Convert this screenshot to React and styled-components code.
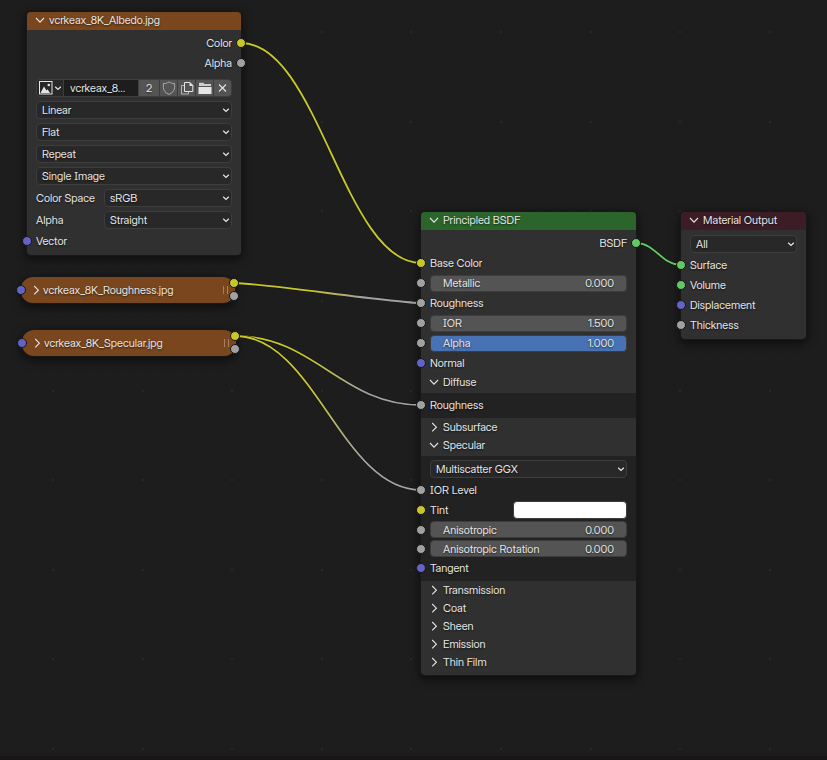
import React, { useId, useState } from 'react'
import styled, { createGlobalStyle } from 'styled-components'

const COLORS = {
    canvas: '#1d1d1d',
    body: '#303030',
    panel: '#222222',
    text: '#e5e5e5',
    image: '#79461d',
    shader: '#2b652b',
    output: '#3c1d26',
    yellow: '#c7c729',
    grey: '#a1a1a1',
    violet: '#6363c7',
    green: '#63c763',
}

const WIRES = [
    { id: 'albedo', from: [241, 43], to: [421, 263], start: COLORS.yellow, end: COLORS.yellow },
    { id: 'roughness', from: [234, 283], to: [421, 303], start: COLORS.yellow, end: COLORS.grey },
    { id: 'diffuse', from: [235, 336], to: [421, 405], start: COLORS.yellow, end: COLORS.grey },
    { id: 'level', from: [235, 336], to: [421, 490], start: COLORS.yellow, end: COLORS.grey },
    { id: 'surface', from: [636, 243], to: [681, 265], start: COLORS.green, end: COLORS.green },
]

const GRID_STEP = 17.93
const GRID_COLUMNS = Array.from({ length: 120 }, (_, i) => i)
const GRID_ROWS = Array.from({ length: 80 }, (_, i) => i)

const Chevron = ({ open }) => (
    <svg width="10" height="10" viewBox="0 0 10 10" fill="none" stroke="currentColor" strokeWidth="1.1">
        <path d={open ? 'M1 3 5 7.2 9 3' : 'M3.2 1 7.4 5.2 3.2 9.4'} />
    </svg>
)

const SmallChevron = () => (
    <svg width="8" height="8" viewBox="0 0 8 8" fill="none" stroke="currentColor" strokeWidth="1.3">
        <path d="M1.2 2.8 4 5.4 6.8 2.8" />
    </svg>
)

const ImageIcon = () => (
    <svg width="14" height="14" viewBox="0 0 14 14">
        <rect x="0.5" y="0.5" width="12.5" height="12.5" fill="none" stroke="#e5e5e5" />
        <path d="M1.5 12 5 5.5 7.5 9.5 8.6 8.2 11 12Z" fill="#e5e5e5" />
        <circle cx="9.8" cy="4" r="1.3" fill="#e5e5e5" />
    </svg>
)

const ShieldIcon = () => (
    <svg width="14" height="14" viewBox="0 0 14 14" fill="none" stroke="#a8a8a8">
        <path d="M7 1C8.8 2.1 10.6 2.6 12.6 2.6V6.5C12.6 9.8 10.2 12 7 13.4 3.8 12 1.4 9.8 1.4 6.5V2.6C3.4 2.6 5.2 2.1 7 1Z" />
    </svg>
)

const CopyIcon = () => (
    <svg width="14" height="14" viewBox="0 0 14 14" fill="none">
        <path d="M4.5 4.5H1.5V13H8.5V10.5" stroke="#b4b4b4" />
        <path d="M4.5 1.5H10L12.8 4.3V10.5H4.5Z" stroke="#e5e5e5" />
        <path d="M9.5 1V5H13.3L9.5 1Z" fill="#e5e5e5" />
    </svg>
)

const FolderIcon = () => (
    <svg width="14" height="14" viewBox="0 0 14 14" fill="#e5e5e5">
        <path d="M1 1.8H5.4L6.6 3H13V5H1Z" opacity="0.85" />
        <path d="M0.5 6H13.5V13H0.5Z" />
    </svg>
)

const CloseIcon = () => (
    <svg width="14" height="14" viewBox="0 0 14 14" stroke="#e5e5e5" strokeWidth="1.1">
        <path d="M3 3.5 10 10.5M10 3.5 3 10.5" />
    </svg>
)

const Grid = () => (
    <GridDrawing aria-hidden="true">
        {GRID_ROWS.map((row) => GRID_COLUMNS.map((column) => {
            const major = row % 5 === 1 && column % 5 === 2
            return (
                <rect
                    key={`${row}-${column}`}
                    x={Math.round(16 + column * GRID_STEP)}
                    y={Math.round(13 + row * GRID_STEP)}
                    width={major ? 2 : 1}
                    height={major ? 2 : 1}
                    fill={major ? '#282828' : '#212121'}
                />
            )
        }))}
    </GridDrawing>
)

const Wires = () => (
    <WireDrawing aria-hidden="true">
        {WIRES.map(({ id, from, to, start, end }) => {
            const dx = to[0] - from[0]
            const slope = Math.abs((to[1] - from[1]) / dx)
            // flat wires get shorter handles so they stay nearly straight
            const reach = dx * 0.43 * Math.min(1, slope * 3.25)
            const d = `M${from[0]} ${from[1]}C${from[0] + reach} ${from[1]} ${to[0] - reach} ${to[1]} ${to[0]} ${to[1]}`
            return (
                <g key={id} fill="none">
                    <linearGradient id={id} gradientUnits="userSpaceOnUse" x1={from[0]} x2={to[0]} y1="0" y2="0">
                        <stop offset="0.4" stopColor={start} />
                        <stop offset="0.68" stopColor={end} />
                    </linearGradient>
                    <path d={d} stroke="#151515" strokeWidth="3" />
                    <path d={d} stroke={`url(#${id})`} strokeWidth="1.8" />
                </g>
            )
        })}
    </WireDrawing>
)

const Dropdown = ({ label, value }) => {
    const id = useId()
    return (
        <FieldRow>
            {label && <FieldLabel htmlFor={id}>{label}</FieldLabel>}
            <SelectBox>
                <Select id={id} aria-label={label ? undefined : value} defaultValue={value}>
                    <option>{value}</option>
                </Select>
                <SelectArrow><SmallChevron /></SelectArrow>
            </SelectBox>
        </FieldRow>
    )
}

const Input = ({ color, children }) => (
    <SocketRow>
        <Socket $color={color} $side="left" />
        {children}
    </SocketRow>
)

const Output = ({ color, children }) => (
    <SocketRow $end>
        {children}
        <Socket $color={color} $side="right" />
    </SocketRow>
)

const NumberField = ({ label, value, full, tight }) => {
    const id = useId()
    return (
        <SocketRow $tight={tight}>
            <Socket $color={COLORS.grey} $side="left" />
            <NumberBox $full={full}>
                <label htmlFor={id}>{label}</label>
                <NumberInput id={id} defaultValue={value} inputMode="decimal" />
            </NumberBox>
        </SocketRow>
    )
}

const Section = ({ title, initiallyOpen = false, children }) => {
    const [open, setOpen] = useState(initiallyOpen)
    return (
        <>
            <SectionButton type="button" $open={open} aria-expanded={open} onClick={() => setOpen(!open)}>
                <Chevron open={open} />
                {title}
            </SectionButton>
            {open && children && <Panel>{children}</Panel>}
        </>
    )
}

const Node = ({ title, color, x, y, width, children }) => (
    <NodeBox $x={x} $y={y} $width={width} aria-label={title}>
        <NodeHeader $color={color}>
            <Chevron open />
            {title}
        </NodeHeader>
        {children}
    </NodeBox>
)

const CollapsedNode = ({ title, x, y }) => (
    <Pill $x={x} $y={y} aria-label={title}>
        <Socket $color={COLORS.violet} $side="left" />
        <PillButton type="button">
            <Chevron />
            {title}
        </PillButton>
        <Grip />
        <PillOutputs>
            <PillSocket $color={COLORS.yellow} />
            <PillSocket $color={COLORS.grey} />
        </PillOutputs>
    </Pill>
)

const App = () => {
    return (
        <Editor>
            <GlobalStyle />
            <Grid />
            <Wires />

            <Node title="vcrkeax_8K_Albedo.jpg" color={COLORS.image} x={27} y={12} width={214}>
                <Output color={COLORS.yellow}>Color</Output>
                <Output color={COLORS.grey}>Alpha</Output>
                <ImageRow>
                    <ImageBar>
                        <BrowseButton type="button" aria-label="Browse image">
                            <ImageIcon />
                            <SmallChevron />
                        </BrowseButton>
                        <ImageName aria-label="Image name" defaultValue="vcrkeax_8..." />
                        <UsersButton type="button">2</UsersButton>
                        <BarButton type="button" aria-label="Fake user"><ShieldIcon /></BarButton>
                        <BarButton type="button" aria-label="New image"><CopyIcon /></BarButton>
                        <BarButton type="button" aria-label="Open image"><FolderIcon /></BarButton>
                        <BarButton type="button" aria-label="Unlink"><CloseIcon /></BarButton>
                    </ImageBar>
                </ImageRow>
                <Dropdown value="Linear" />
                <Dropdown value="Flat" />
                <Dropdown value="Repeat" />
                <Dropdown value="Single Image" />
                <Dropdown label="Color Space" value="sRGB" />
                <Dropdown label="Alpha" value="Straight" />
                <Input color={COLORS.violet}>Vector</Input>
            </Node>

            <CollapsedNode title="vcrkeax_8K_Roughness.jpg" x={21} y={277} />
            <CollapsedNode title="vcrkeax_8K_Specular.jpg" x={22} y={330} />

            <Node title="Principled BSDF" color={COLORS.shader} x={421} y={212} width={215}>
                <Output color={COLORS.green}>BSDF</Output>
                <Input color={COLORS.yellow}>Base Color</Input>
                <NumberField label="Metallic" value="0.000" />
                <Input color={COLORS.grey}>Roughness</Input>
                <NumberField label="IOR" value="1.500" />
                <NumberField label="Alpha" value="1.000" full />
                <Input color={COLORS.violet}>Normal</Input>
                <Section title="Diffuse" initiallyOpen>
                    <Input color={COLORS.grey}>Roughness</Input>
                </Section>
                <Section title="Subsurface" />
                <Section title="Specular" initiallyOpen>
                    <Dropdown value="Multiscatter GGX" />
                    <Input color={COLORS.grey}>IOR Level</Input>
                    <Input color={COLORS.yellow}>
                        Tint
                        <Swatch type="button" aria-label="Tint" />
                    </Input>
                    <NumberField label="Anisotropic" value="0.000" tight />
                    <NumberField label="Anisotropic Rotation" value="0.000" tight />
                    <Input color={COLORS.violet}>Tangent</Input>
                </Section>
                <Section title="Transmission" />
                <Section title="Coat" />
                <Section title="Sheen" />
                <Section title="Emission" />
                <Section title="Thin Film" />
            </Node>

            <Node title="Material Output" color={COLORS.output} x={681} y={212} width={125}>
                <Dropdown value="All" />
                <Input color={COLORS.green}>Surface</Input>
                <Input color={COLORS.green}>Volume</Input>
                <Input color={COLORS.violet}>Displacement</Input>
                <Input color={COLORS.grey}>Thickness</Input>
            </Node>
        </Editor>
    )
}

const GlobalStyle = createGlobalStyle`
* {
box-sizing: border-box;
}

body {
margin: 0;
background-color: ${COLORS.canvas};
}

svg {
display: block;
flex: none;
}

body, button, input, select {
font-family: "Inter Display", Inter, "Liberation Sans", sans-serif;
font-size: 11px;
font-feature-settings: "cv08";
color: ${COLORS.text};
text-shadow: 0 1px 2px rgba(0, 0, 0, 0.6);
}

button {
cursor: pointer;
}
`
const Editor = styled.main`
position: relative;
min-height: 100vh;
overflow: hidden;
background-color: ${COLORS.canvas};
border-bottom: 4px solid #1a1517;
`
const GridDrawing = styled.svg`
position: absolute;
inset: 0;
width: 100%;
height: 100%;
`
const WireDrawing = styled(GridDrawing)`
z-index: 1;
pointer-events: none;
`
const NodeBox = styled.section`
position: absolute;
left: ${({ $x }) => $x}px;
top: ${({ $y }) => $y}px;
width: ${({ $width }) => $width}px;
padding-bottom: 4px;
border-radius: 4px;
background-color: ${COLORS.body};
box-shadow: 0 0 0 1px #181818, 0 3px 9px 2px rgba(0, 0, 0, 0.5);
`
const NodeHeader = styled.header`
display: flex;
align-items: center;
gap: 4px;
height: 18px;
margin-bottom: 3px;
padding: 0 8px 2px;
border-radius: 4px 4px 0 0;
background-color: ${({ $color }) => $color};
`
const SocketRow = styled.div`
position: relative;
display: flex;
align-items: center;
justify-content: ${({ $end }) => ($end ? 'flex-end' : 'space-between')};
height: ${({ $tight }) => ($tight ? 19 : 20)}px;
padding: 0 9px;
`
const PillSocket = styled.i`
position: relative;
z-index: 2;
width: 10px;
height: 10px;
border: 1px solid #161616;
border-radius: 50%;
background-color: ${({ $color }) => $color};
`
/* sits on the border of its node */
const Socket = styled(PillSocket)`
position: absolute;
top: calc(50% - 5px);
${({ $side }) => $side}: -5px;
`
const FieldRow = styled.div`
display: flex;
align-items: center;
height: 22px;
padding: 0 9px;
`
const FieldLabel = styled.label`
flex: 0 0 68px;
`
const SelectBox = styled.div`
display: grid;
flex: 1;
min-width: 0;
align-items: center;
`
const Select = styled.select`
grid-area: 1 / 1;
width: 100%;
height: 18px;
padding: 0 5px;
appearance: none;
border: 1px solid #3d3d3d;
border-radius: 4px;
outline: none;
background-color: #282828;
`
const SelectArrow = styled.span`
grid-area: 1 / 1;
justify-self: end;
margin-right: 2px;
pointer-events: none;
`
const ImageRow = styled(FieldRow)`
margin-top: 4px;
`
const ImageBar = styled.div`
display: flex;
flex: 1;
gap: 1px;
height: 18px;
overflow: hidden;
border: 1px solid #3d3d3d;
border-radius: 4px;
background-color: #3d3d3d;
`
const BrowseButton = styled.button`
display: flex;
flex: 0 0 26px;
align-items: center;
gap: 1px;
padding: 0 1px 0 2px;
border: none;
background-color: #282828;
`
const ImageName = styled.input`
flex: 1;
min-width: 0;
padding: 0 0 0 6px;
border: none;
outline: none;
background-color: ${COLORS.canvas};
`
const BarButton = styled.button`
display: flex;
flex: 0 0 17px;
align-items: center;
justify-content: center;
padding: 0;
border: none;
background-color: #545454;
`
const UsersButton = styled(BarButton)`
flex-basis: 20px;
`
const NumberBox = styled.div`
display: flex;
flex: 1;
align-items: center;
justify-content: space-between;
height: 17px;
padding: 0 12px;
border: 1px solid #3d3d3d;
border-radius: 4px;
background-color: ${({ $full }) => ($full ? '#4772b3' : '#545454')};
`
const NumberInput = styled.input`
width: 48px;
padding: 0;
border: none;
outline: none;
background: none;
text-align: right;
`
const Swatch = styled.button`
width: 114px;
height: 18px;
padding: 0;
border: 1px solid #3d3d3d;
border-radius: 4px;
background-color: #ffffff;
`
const SectionButton = styled.button`
display: flex;
align-items: center;
gap: 4px;
width: 100%;
height: ${({ $open }) => ($open ? 20 : 18)}px;
padding: ${({ $open }) => ($open ? '0 8px 2px' : '0 8px')};
border: none;
background: none;
`
const Panel = styled.div`
padding: 2px 0 3px;
background-color: ${COLORS.panel};
`
const Pill = styled.section`
position: absolute;
left: ${({ $x }) => $x}px;
top: ${({ $y }) => $y}px;
display: flex;
align-items: center;
width: 214px;
height: 26px;
padding: 0 0 1px 10px;
border-radius: 12px;
background-color: ${COLORS.image};
box-shadow: 0 0 0 1px #181818, 0 3px 9px 2px rgba(0, 0, 0, 0.5);
`
const PillButton = styled.button`
display: flex;
flex: 1;
align-items: center;
gap: 2px;
padding: 0;
border: none;
background: none;
`
const Grip = styled.span`
width: 5px;
height: 8px;
margin-right: 1px;
border: solid #a5805f;
border-width: 0 1px;
`
const PillOutputs = styled.div`
display: flex;
flex-direction: column;
gap: 3px;
margin-right: -4px;
`

export default App
